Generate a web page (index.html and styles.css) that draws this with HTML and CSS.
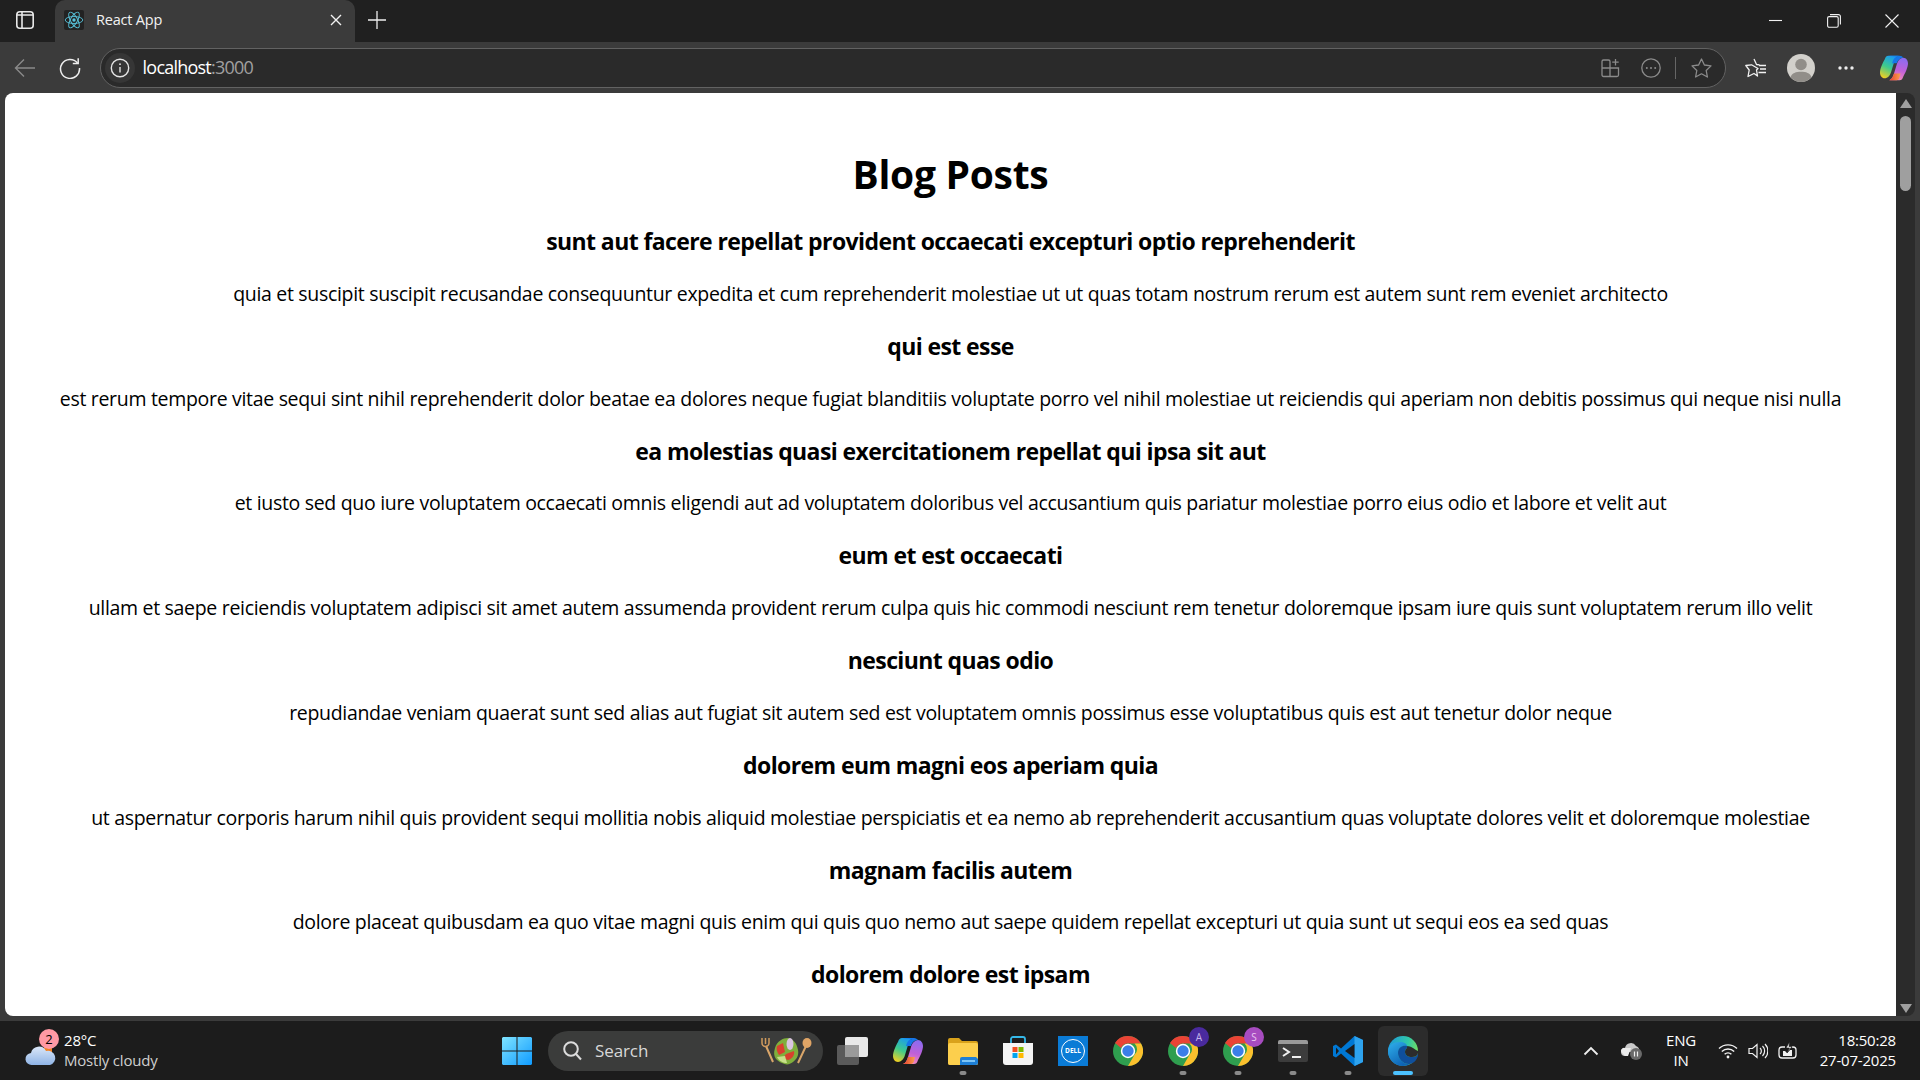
FILE: index.html
```html
<!DOCTYPE html>
<html lang="en">
<head>
<meta charset="utf-8">
<title>React App</title>
<link rel="stylesheet" href="styles.css">
</head>
<body>
<svg class="defs" width="0" height="0" aria-hidden="true">
  <defs>
    <linearGradient id="cpA" x1=".6" y1="0" x2=".2" y2="1"><stop offset="0" stop-color="#1a9bf0"/><stop offset=".5" stop-color="#3ecb8c"/><stop offset="1" stop-color="#f5d020"/></linearGradient>
    <linearGradient id="cpB" x1=".6" y1="0" x2=".4" y2="1"><stop offset="0" stop-color="#8a6cf0"/><stop offset=".55" stop-color="#c060d8"/><stop offset="1" stop-color="#f48ab8"/></linearGradient>
    <linearGradient id="cpC" x1="0" y1="0" x2="1" y2="0"><stop offset="0" stop-color="#e8402c"/><stop offset="1" stop-color="#f8a050"/></linearGradient>
    <linearGradient id="edgeA" x1="0" y1="0" x2=".6" y2="1"><stop offset="0" stop-color="#2fb0ec"/><stop offset="1" stop-color="#0e62b4"/></linearGradient>
    <linearGradient id="edgeB" x1="0" y1=".4" x2="1" y2=".6"><stop offset="0" stop-color="#1f9bd8"/><stop offset=".6" stop-color="#30c8a8"/><stop offset="1" stop-color="#78e05a"/></linearGradient>
    <linearGradient id="winG" x1="0" y1="0" x2="1" y2="1"><stop offset="0" stop-color="#7fe3ff"/><stop offset="1" stop-color="#0f9bff"/></linearGradient>
    <linearGradient id="cloudG" x1="0" y1="0" x2="0" y2="1"><stop offset="0" stop-color="#dbe7f8"/><stop offset="1" stop-color="#8fb4e6"/></linearGradient>
    <symbol id="copilot" viewBox="0 0 30 30">
      <path d="M18 11l-3 10c-1 3-2 6-5 7h11c2 0 3-1 4-4 2-3 5-10 5-14 0-3-2-6-5-6-3 0-6 3-7 7z" fill="url(#cpB)"/>
      <path d="M9 2h11c-3 1-4 4-5 7l-3 10c-1 4-4 7-7 7s-5-3-5-6c0-4 3-11 5-14 1-3 2-4 4-4z" fill="url(#cpA)"/>
      <path d="M9 2h12c2 0 3 1 4 2-3 0-6 2-7 6h-5c1-4 3-7 6-7z" fill="#1676e8"/>
      <path d="M10 28c3-1 4-4 5-7h7c-1 3-1 7-4 7z" fill="url(#cpC)"/>
    </symbol>
    <symbol id="chrome" viewBox="0 0 30 30">
      <circle cx="15" cy="15" r="15" fill="#2f9e4f"/>
      <path d="M15 0a15 15 0 0 1 13 7.500H15a7.500 7.500 0 0 0-6.900 4.600L2 7A15 15 0 0 1 15 0z" fill="#ea4335"/>
      <path d="M28 7.500A15 15 0 0 1 15 30l6.500-11.200A7.500 7.500 0 0 0 21.500 7.500z" fill="#fbc02d"/>
      <circle cx="15" cy="15" r="7.200" fill="#fff"/>
      <circle cx="15" cy="15" r="5.700" fill="#3b7ee8"/>
    </symbol>
  </defs>
</svg>

<div class="screen">
  <header class="tabstrip">
    <svg class="ic-sidebar" width="18" height="18" viewBox="0 0 18 18" fill="none" stroke="#e8e8e8" stroke-width="1.600"><rect x=".8" y=".8" width="16.400" height="16.400" rx="3"/><path d="M6 .8v16.400M.8 4h16.400"/></svg>
    <div class="tab">
      <span class="favicon">
        <svg width="20" height="20" viewBox="0 0 20 20" fill="none" stroke="#58c4dc" stroke-width=".9"><ellipse cx="10" cy="10" rx="8.800" ry="3.500"/><ellipse cx="10" cy="10" rx="8.800" ry="3.500" transform="rotate(60 10 10)"/><ellipse cx="10" cy="10" rx="8.800" ry="3.500" transform="rotate(120 10 10)"/><circle cx="10" cy="10" r="1.700" fill="#58c4dc" stroke="none"/></svg>
      </span>
      <span class="tab-title">React App</span>
      <svg class="tab-close" width="12" height="12" viewBox="0 0 12 12" stroke="#f2f2f2" stroke-width="1.400"><path d="M1 1l10 10M11 1L1 11"/></svg>
    </div>
    <svg class="ic-plus" width="18" height="18" viewBox="0 0 18 18" stroke="#eee" stroke-width="1.300"><path d="M9 0v18M0 9h18"/></svg>
    <div class="winctl">
      <svg width="14" height="14" viewBox="0 0 14 14" stroke="#f2f2f2" stroke-width="1.100"><path d="M0 6.500h13"/></svg>
      <svg width="14" height="14" viewBox="0 0 14 14" fill="none" stroke="#f2f2f2" stroke-width="1.100"><rect x=".6" y="2.600" width="10.600" height="10.600" rx="1.500"/><path d="M3 .6h8.400a2 2 0 0 1 2 2v8"/></svg>
      <svg width="14" height="14" viewBox="0 0 14 14" stroke="#f2f2f2" stroke-width="1.100"><path d="M.5.5l13 13M13.500.5l-13 13"/></svg>
    </div>
  </header>

  <nav class="toolbar">
    <svg class="tool-back" width="22" height="20" viewBox="0 0 22 20" fill="none" stroke="#8a8a8a" stroke-width="1.400"><path d="M21 10H1.500M10 1.500L1.500 10l8.500 8.500"/></svg>
    <svg class="tool-reload" width="22" height="22" viewBox="0 0 22 22" fill="none" stroke="#ededed" stroke-width="1.500"><path d="M18.500 6A9.500 9.500 0 1 0 20.500 11"/><path d="M19.200 1.200V6.500H13.800"/></svg>
    <div class="omnibox">
      <span class="site-info">
        <svg width="20" height="20" viewBox="0 0 20 20" fill="none" stroke="#e4e4e4" stroke-width="1.400"><circle cx="10" cy="10" r="8.700"/><path d="M10 9v5.500"/><circle cx="10" cy="6.200" r=".9" fill="#e4e4e4" stroke="none"/></svg>
      </span>
      <span class="url">localhost<span class="url-port">:3000</span></span>
      <span class="omni-actions">
        <svg width="20" height="20" viewBox="0 0 20 20" fill="none" stroke="#8b8b8b" stroke-width="1.300"><path d="M2.500 2h5a1.500 1.500 0 0 1 1.500 1.500V10H1V3.500A1.500 1.500 0 0 1 2.500 2zM1 10h8v8.500H2.500A1.500 1.500 0 0 1 1 17zM9 10h8.500v7a1.500 1.500 0 0 1-1.500 1.500H9zM14.500 1v6.500M11.200 4.200h6.500"/></svg>
        <svg width="20" height="20" viewBox="0 0 20 20" fill="none" stroke="#8b8b8b" stroke-width="1.300"><circle cx="10" cy="10" r="9.200"/><circle cx="5.800" cy="10" r="1" fill="#8b8b8b" stroke="none"/><circle cx="10" cy="10" r="1" fill="#8b8b8b" stroke="none"/><circle cx="14.200" cy="10" r="1" fill="#8b8b8b" stroke="none"/></svg>
        <span class="omni-sep"></span>
        <svg width="21" height="20" viewBox="0 0 21 20" fill="none" stroke="#8b8b8b" stroke-width="1.300" stroke-linejoin="round"><path d="M10.500 1l2.900 6 6.600.9-4.800 4.600 1.200 6.500-5.900-3.200-5.900 3.200 1.200-6.500L1 7.900 7.600 7z"/></svg>
      </span>
    </div>
    <div class="tool-right">
      <svg width="21" height="20" viewBox="0 0 21 20" fill="none" stroke="#f2f2f2" stroke-width="1.300" stroke-linejoin="round"><path d="M9 1l2.500 5.500 3 .4M13 10.500l-1.500 1.500 1 6-3.500-2.500L3 18.500l1.200-6.500L.8 7.500 6.500 6.800z"/><path d="M14 7.500h7M15 11h6M13.500 14.500h7.500"/></svg>
      <svg class="avatar" width="28" height="28" viewBox="0 0 28 28"><circle cx="14" cy="14" r="14" fill="#d2d0cb"/><circle cx="14" cy="10.500" r="5.800" fill="#918e89"/><path d="M3.500 23.200C5 19 9 17.800 14 17.800s9 1.200 10.500 5.400A14 14 0 0 1 14 28a14 14 0 0 1-10.500-4.800z" fill="#918e89"/></svg>
      <svg width="16" height="4" viewBox="0 0 16 4" fill="#eee"><circle cx="2" cy="2" r="1.700"/><circle cx="8" cy="2" r="1.700"/><circle cx="14" cy="2" r="1.700"/></svg>
      <svg class="tool-copilot" width="28" height="28"><use href="#copilot"/></svg>
    </div>
  </nav>

  <div class="viewport">
    <main class="page">
      <h1>Blog Posts</h1>
      <article>
        <h3>sunt aut facere repellat provident occaecati excepturi optio reprehenderit</h3>
        <p>quia et suscipit suscipit recusandae consequuntur expedita et cum reprehenderit molestiae ut ut quas totam nostrum rerum est autem sunt rem eveniet architecto</p>
      </article>
      <article>
        <h3>qui est esse</h3>
        <p>est rerum tempore vitae sequi sint nihil reprehenderit dolor beatae ea dolores neque fugiat blanditiis voluptate porro vel nihil molestiae ut reiciendis qui aperiam non debitis possimus qui neque nisi nulla</p>
      </article>
      <article>
        <h3>ea molestias quasi exercitationem repellat qui ipsa sit aut</h3>
        <p>et iusto sed quo iure voluptatem occaecati omnis eligendi aut ad voluptatem doloribus vel accusantium quis pariatur molestiae porro eius odio et labore et velit aut</p>
      </article>
      <article>
        <h3>eum et est occaecati</h3>
        <p>ullam et saepe reiciendis voluptatem adipisci sit amet autem assumenda provident rerum culpa quis hic commodi nesciunt rem tenetur doloremque ipsam iure quis sunt voluptatem rerum illo velit</p>
      </article>
      <article>
        <h3>nesciunt quas odio</h3>
        <p>repudiandae veniam quaerat sunt sed alias aut fugiat sit autem sed est voluptatem omnis possimus esse voluptatibus quis est aut tenetur dolor neque</p>
      </article>
      <article>
        <h3>dolorem eum magni eos aperiam quia</h3>
        <p>ut aspernatur corporis harum nihil quis provident sequi mollitia nobis aliquid molestiae perspiciatis et ea nemo ab reprehenderit accusantium quas voluptate dolores velit et doloremque molestiae</p>
      </article>
      <article>
        <h3>magnam facilis autem</h3>
        <p>dolore placeat quibusdam ea quo vitae magni quis enim qui quis quo nemo aut saepe quidem repellat excepturi ut quia sunt ut sequi eos ea sed quas</p>
      </article>
      <article>
        <h3>dolorem dolore est ipsam</h3>
      </article>
    </main>
    <aside class="scrollbar">
      <span class="arrow-up"></span>
      <span class="thumb"></span>
      <span class="track-fill"></span>
      <span class="arrow-down"></span>
    </aside>
  </div>

  <footer class="taskbar">
    <div class="tb-left">
      <span class="weather-icon">
        <svg width="32" height="22" viewBox="0 0 32 22"><rect x="19" y="0" width="8" height="8" fill="#f08020"/><path d="M7 21a6 6 0 0 1-1-12 8 8 0 0 1 15-2 6.500 6.500 0 0 1 4 14z" fill="url(#cloudG)"/></svg>
        <span class="badge-pink">2</span>
      </span>
      <div class="weather-text">
        <span class="temp">28°C</span>
        <span class="cond">Mostly cloudy</span>
      </div>
    </div>

    <div class="tb-center">
      <span class="tb-item tb-start">
        <svg width="30" height="30" viewBox="0 0 30 30" fill="url(#winG)"><path d="M1 1h13.500v13.500H0V2zM15.500 1H29l1 1v12.500H15.500zM0 15.500h14.500V29H1l-1-1zM15.500 15.500H30V28l-1 1H15.500z"/></svg>
      </span>
      <div class="search">
        <svg width="19" height="20" viewBox="0 0 19 20" fill="none" stroke="#dcdcdc" stroke-width="2"><circle cx="8" cy="8" r="6.800"/><path d="M13 13l5 5.500"/></svg>
        <span class="search-label">Search</span>
        <svg class="salad" width="52" height="30" viewBox="0 0 52 30">
          <path d="M6 10l7 16M46 10l-8 17" stroke="#d9a66a" stroke-width="2" fill="none"/>
          <path d="M2 2v5a3.500 3.500 0 0 0 7 0V2M5.500 2v6" stroke="#d09a5e" stroke-width="1.500" fill="none"/>
          <ellipse cx="47" cy="7" rx="4.500" ry="5" fill="#dfa566"/>
          <path d="M15 12c2-7 8-10 13-10 6 1 9 6 10 12 1 5-1 9-5 12-4 3-7 3-11 1-5-2-10-6-7-15z" fill="#7fae3c"/>
          <path d="M17 10l6-3 2 9-6 3c-2-3-3-6-2-9z" fill="#d8402e"/>
          <path d="M26 18l8-3c1 4-2 8-6 9l-5-2z" fill="#d8402e"/>
          <ellipse cx="30" cy="8" rx="3.500" ry="6" fill="#d9c5e0"/>
          <path d="M17 21l8-1 2 7c-4 0-8-2-10-6z" fill="#c8e08a"/>
        </svg>
      </div>
      <span class="tb-item tb-taskview">
        <svg width="32" height="28" viewBox="0 0 32 28"><rect x="0" y="8" width="22" height="20" rx="2" fill="#5a5a5a"/><rect x="8" y="0" width="23" height="20" rx="2" fill="#e8e8e8"/><rect x="8" y="8" width="14" height="12" fill="#9a9a9a"/></svg>
      </span>
      <span class="tb-item"><svg width="30" height="30"><use href="#copilot"/></svg></span>
      <span class="tb-item running">
        <svg width="30" height="28" viewBox="0 0 30 28"><path d="M0 3a2 2 0 0 1 2-2h9l3 3h14a2 2 0 0 1 2 2v20a2 2 0 0 1-2 2H2a2 2 0 0 1-2-2z" fill="#d9a21b"/><rect x="0" y="6" width="30" height="22" rx="2" fill="#fccf4d"/><path d="M12 28v-6a2 2 0 0 1 2-2h14l2 2v4a2 2 0 0 1-2 2z" fill="#1d7fd6"/><rect x="14" y="23" width="13" height="2" fill="#7cc4f5"/></svg>
      </span>
      <span class="tb-item">
        <svg width="30" height="30" viewBox="0 0 30 30"><path d="M8 7V3a2 2 0 0 1 2-2h10a2 2 0 0 1 2 2v4" fill="none" stroke="#35b8e8" stroke-width="1.800"/><path d="M0 7h30v19a3 3 0 0 1-3 3H3a3 3 0 0 1-3-3z" fill="#f4f4f4"/><rect x="9.500" y="11" width="5" height="5" fill="#f25022"/><rect x="15.500" y="11" width="5" height="5" fill="#7fba00"/><rect x="9.500" y="17" width="5" height="5" fill="#00a4ef"/><rect x="15.500" y="17" width="5" height="5" fill="#ffb900"/></svg>
      </span>
      <span class="tb-item"><span class="dell"><span class="dell-ring">DELL</span></span></span>
      <span class="tb-item"><svg width="30" height="30"><use href="#chrome"/></svg></span>
      <span class="tb-item running">
        <svg width="30" height="30"><use href="#chrome"/></svg>
        <span class="profile profile-a">A</span>
      </span>
      <span class="tb-item running">
        <svg width="30" height="30"><use href="#chrome"/></svg>
        <span class="profile profile-s">S</span>
      </span>
      <span class="tb-item running">
        <svg width="30" height="22" viewBox="0 0 30 22"><rect width="30" height="22" rx="2" fill="#3c3c3c"/><path d="M0 2a2 2 0 0 1 2-2h26a2 2 0 0 1 2 2v2H0z" fill="#9a9a9a"/><path d="M5 8l6 4-6 4" fill="none" stroke="#eee" stroke-width="2"/><path d="M14 17h9" stroke="#eee" stroke-width="2"/></svg>
      </span>
      <span class="tb-item running">
        <svg width="30" height="30" viewBox="0 0 30 30"><path d="M21.500 0L30 4v22l-8.500 4L8 17.500 3 21.500 0 20v-10l3-1.500 5 4z" fill="#0078d4"/><path d="M21.500 0L30 4v22l-8.500 4z" fill="#2ea3ee"/><path d="M21.500 8L12 15l9.500 7z" fill="#1c1c1c"/><path d="M3 11.500L6 15l-3 3.500z" fill="#1c1c1c"/></svg>
      </span>
      <span class="tb-item active">
        <svg width="30" height="30" viewBox="0 0 30 30">
          <circle cx="15" cy="15" r="15" fill="url(#edgeB)"/>
          <path d="M0 15C0 9 6 6 12 6c4 0 7 2 7 4-4-1-9 1-9 7 0 6 6 12 12 11-2 1-4 2-7 2C6 30 0 23 0 15z" fill="url(#edgeA)"/>
          <path d="M19 10c1 2-2 3-2 6s3 5 7 5c3 0 5-1 6-4v3c-2 5-4 7-8 8-6 1-12-5-12-11 0-6 5-8 9-7z" fill="#0f4f9c"/>
          <path d="M30 17c-1 3-3 4-6 4-4 0-7-2-7-5s3-4 2-6c4 0 7 3 11 5z" fill="#2c2c2c"/>
        </svg>
      </span>
    </div>

    <div class="tb-right">
      <svg class="tray-chevron" width="16" height="10" viewBox="0 0 16 10" fill="none" stroke="#eee" stroke-width="1.800"><path d="M1.500 8.500L8 2l6.500 6.500"/></svg>
      <span class="tray-od">
        <svg width="21" height="18" viewBox="0 0 21 18"><path d="M4 14a4 4 0 0 1 0-8 6 6 0 0 1 11-2 5 5 0 0 1 3 6H8l-2 4z" fill="#c9c9c9"/><path d="M1 11a3 3 0 0 1 3-5h6l-3 8H4z" fill="#ececec"/><circle cx="15" cy="12" r="6" fill="#6a6a6a"/><path d="M13.500 9.500v5M16.500 9.500v5" stroke="#eee" stroke-width="1.200"/></svg>
      </span>
      <div class="lang"><span>ENG</span><span>IN</span></div>
      <div class="tray-icons">
        <svg width="20" height="16" viewBox="0 0 20 16" fill="none" stroke="#f2f2f2" stroke-width="1.400"><path d="M1 5.500a13 13 0 0 1 18 0M3.800 8.500a9 9 0 0 1 12.400 0M6.600 11.300a5 5 0 0 1 6.800 0"/><circle cx="10" cy="14" r="1.400" fill="#f2f2f2" stroke="none"/></svg>
        <svg width="20" height="16" viewBox="0 0 20 16" fill="none" stroke="#f2f2f2" stroke-width="1.200"><path d="M1 5.500h3.500L9 1.500v13l-4.500-4H1zM12 5a4 4 0 0 1 0 6M14.500 3a7 7 0 0 1 0 10M17 1a10 10 0 0 1 0 14"/></svg>
        <svg width="20" height="18" viewBox="0 0 20 18" fill="none" stroke="#f2f2f2" stroke-width="1.300"><path d="M7 5H4a3 3 0 0 0-3 3v5a3 3 0 0 0 3 3h11a3 3 0 0 0 3-3V8a3 3 0 0 0-3-3h-1"/><path d="M5 9h2l2 2 3-3h2v6H5z" fill="#f2f2f2" stroke="none"/><path d="M11.500 0L8 6h3.500L9 11l5-6.500h-3z" fill="#f2f2f2" stroke="#1c1c1c" stroke-width=".6"/></svg>
      </div>
      <div class="clock"><span>18:50:28</span><span>27-07-2025</span></div>
    </div>
  </footer>
</div>
</body>
</html>
```

FILE: styles.css
```css
* { box-sizing: border-box; }
html, body { margin: 0; height: 100%; overflow: hidden; }
body { font-family: "Open Sans", "Noto Sans", "Liberation Sans", sans-serif; background: #3b3b3b; }
.defs { position: absolute; }

.screen { width: 1920px; height: 1080px; display: grid; grid-template-columns: 1920px; grid-template-rows: 42px 51px 923px 5px 59px; background: #3b3b3b; overflow: hidden; }

/* tab strip */
.tabstrip { display: flex; align-items: center; background: #202020; padding-left: 16px; min-width: 0; }
.ic-sidebar { flex: none; margin-bottom: 2px; }
.tab { margin-left: 21px; width: 300px; height: 42px; background: #3b3b3b; border-radius: 10px 10px 0 0; display: flex; align-items: center; padding: 0 13px 2px 9px; align-self: flex-end; }
.favicon { width: 20px; height: 20px; display: flex; background: #222; border-radius: 2px; }
.tab-title { margin-left: 12px; margin-bottom: 2px; color: #f2f2f2; font-size: 14.500px; letter-spacing: -.2px; flex: 1; }
.ic-plus { margin-left: 13px; margin-bottom: 2px; }
.winctl { margin-left: auto; display: flex; gap: 44px; padding-right: 21px; align-items: center; }
.winctl svg { display: block; }

/* toolbar */
.toolbar { display: flex; align-items: center; background: #3b3b3b; padding-left: 14px; min-width: 0; }
.tool-reload { margin-left: 22.600px; }
.omnibox { flex: none; margin-left: 19px; width: 1626px; height: 40px; background: #2a2a2a; border: 1.500px solid #626262; border-radius: 20px; display: flex; align-items: center; padding-left: 4px; }
.site-info { width: 30px; height: 30px; border-radius: 50%; background: #363636; display: flex; align-items: center; justify-content: center; }
.url { margin-left: 8px; margin-bottom: 2px; color: #fff; font-size: 18px; letter-spacing: -.78px; }
.url-port { color: #a0a0a0; }
.omni-actions { margin-left: auto; display: flex; align-items: center; gap: 20px; padding-right: 13px; }
.omni-sep { width: 1px; height: 22px; background: #666; margin: 0 -5px 0 -6px; }
.tool-right { margin-left: 19px; display: flex; align-items: center; gap: 21px; }
.tool-right .avatar { margin-right: 2px; }
.tool-copilot { margin-left: 5px; }

/* page */
.viewport { display: flex; padding: 0 5px; overflow: hidden; min-width: 0; }
.page { flex: 1; background: #fff; color: #000; text-align: center; border-radius: 8px 0 0 8px; padding: 27px 10px 0; overflow: hidden; min-width: 0; }
.page h1 { font-size: 39px; line-height: 53px; margin: 27px 0 26px; font-weight: 700; letter-spacing: -.3px; }
.page h3 { font-size: 23px; line-height: 31.400px; margin: 23.400px 0; font-weight: 700; letter-spacing: -.6px; }
.page p { font-size: 19.500px; line-height: 26.600px; margin: 20px 0; letter-spacing: -.31px; white-space: nowrap; }
.page article:first-of-type h3 { margin-top: 0; }

.scrollbar { flex: none; width: 19px; background: #2b2b2b; border-radius: 0 8px 8px 0; display: flex; flex-direction: column; align-items: center; padding: 6px 0 3px; }
.arrow-up, .arrow-down { width: 0; height: 0; border-left: 6.500px solid transparent; border-right: 6.500px solid transparent; }
.arrow-up { border-bottom: 9px solid #9f9f9f; }
.arrow-down { border-top: 9px solid #9f9f9f; }
.thumb { width: 11px; height: 75px; background: #9f9f9f; border-radius: 6px; margin-top: 8px; }
.track-fill { flex: 1; }

/* taskbar */
.taskbar { grid-row: 5; display: grid; grid-template-columns: 495px auto minmax(0, 1fr); align-items: center; background: #1c1c1c; color: #fff; }
.tb-left { display: flex; align-items: center; padding-left: 25px; }
.weather-icon { position: relative; width: 32px; height: 22px; margin-top: 8px; }
.weather-icon svg { display: block; }
.badge-pink { position: absolute; left: 14px; top: -15px; width: 20px; height: 20px; border-radius: 50%; background: #ff99a4; color: #000; font-size: 13px; line-height: 20px; text-align: center; }
.weather-text { display: flex; flex-direction: column; margin: 0 0 2px 7px; font-size: 15px; line-height: 20px; letter-spacing: -.2px; }
.cond { color: #cfcfcf; }

.tb-center { display: flex; align-items: center; }
.tb-item { position: relative; flex: none; width: 50px; height: 50px; margin-right: 5px; display: flex; align-items: center; justify-content: center; border-radius: 6px; }
.tb-item svg { display: block; }
.tb-item.running::after, .tb-item.active::after { content: ""; position: absolute; bottom: 1px; left: 50%; transform: translateX(-50%); width: 7px; height: 4px; border-radius: 2px; background: #8a8a8a; }
.tb-item.active { background: #2c2c2c; }
.tb-item.active::after { width: 20px; background: #4cc2ff; }
.tb-start { width: 50px; margin-left: -3px; margin-right: 6px; }

.search { flex: none; width: 275px; height: 40px; background: #3b3c3b; border-radius: 20px; display: flex; align-items: center; padding: 0 11px 0 15px; margin-right: 10px; }
.search-label { margin-left: 13px; color: #d8d8d8; font-size: 17px; letter-spacing: -.1px; flex: 1; }
.tb-taskview { width: 40px; margin-right: 10px; }

.dell { width: 30px; height: 30px; background: #0a7bd6; display: flex; align-items: center; justify-content: center; }
.dell-ring { width: 24px; height: 24px; border: 1.200px solid #fff; border-radius: 50%; color: #fff; font-size: 6.500px; font-weight: 700; line-height: 21.500px; text-align: center; }

.profile { position: absolute; top: 1px; right: -1px; width: 20px; height: 20px; border-radius: 50%; font-size: 10px; line-height: 20px; text-align: center; }
.profile-a { background: #4a2a9e; color: #c5b5ec; }
.profile-s { background: #a74cc0; color: #ecc8f2; }

.tb-right { display: flex; align-items: center; padding-left: 150px; }
.tray-od { margin-left: 22px; display: flex; }
.lang { margin: 0 0 2px 21px; width: 36px; display: flex; flex-direction: column; align-items: center; font-size: 15px; line-height: 20px; letter-spacing: -.2px; }
.tray-icons { margin-left: 19px; display: flex; gap: 10px; align-items: center; }
.clock { margin: 0 24px 2px auto; display: flex; flex-direction: column; align-items: flex-end; font-size: 15px; line-height: 20px; letter-spacing: -.2px; }
```
